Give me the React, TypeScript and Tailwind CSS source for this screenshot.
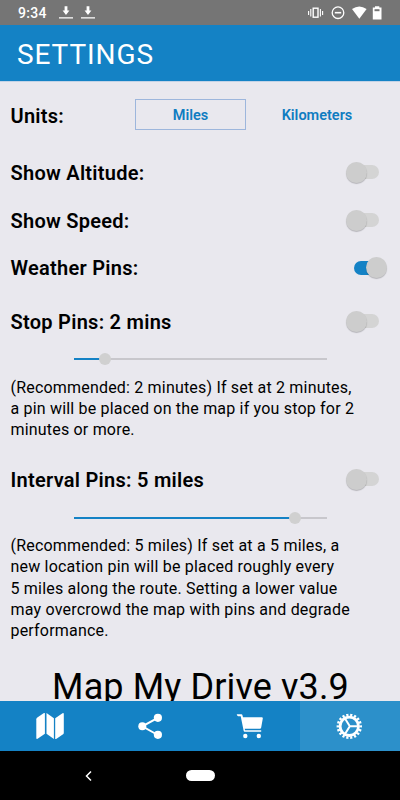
import { useState } from "react";

const DownloadIcon = () => (
  <svg width="14" height="13" viewBox="0 0 14 13" fill="white">
    <path d="M5.6 0.3h2.800v4.200h2L7 9 3.600 4.500h2zM0 11.200h14v1.200H0z" />
  </svg>
);

const MapIcon = () => (
  <svg width="28" height="28" viewBox="0 0 28 28" fill="currentColor">
    <path d="M8.900 1v20.800L1.600 26.800Q.3 27.300.3 26V7.300Q.3 6.300 1 5.800L7.500 1.300Q8.300.8 8.900 1z" />
    <path d="M10.500 1L17.900 6.200V27L10.500 21.800z" />
    <path d="M19.200 27V6.200L26.500 1.200Q27.800.7 27.800 2V20.700Q27.800 21.700 27.100 22.200L20.500 26.700Q19.800 27.200 19.200 27z" />
  </svg>
);

const ShareIcon = () => (
  <svg width="28" height="28" viewBox="0 0 28 28" fill="currentColor">
    <path
      d="M21.800 5.800L6.300 14.300L21.800 23"
      fill="none"
      stroke="currentColor"
      strokeWidth="2"
    />
    <circle cx="6.300" cy="14.300" r="4" />
    <circle cx="21.900" cy="5.800" r="4.100" />
    <circle cx="21.900" cy="22.800" r="4.100" />
  </svg>
);

const CartIcon = () => (
  <svg width="28" height="28" viewBox="0 0 28 28" fill="currentColor">
    <path d="M.7 2.300H5.500Q6.200 2.300 6.400 3L7 5.300H25.800Q27 5.300 26.800 6.500L25.200 15.500Q25 16.700 23.800 16.700H8.700L9 18.300H25.200V19.800H8.600Q7.900 19.800 7.700 19L4.700 4.300H2.200Q1.200 4.300.7 2.300z" />
    <circle cx="9.300" cy="24" r="2.200" />
    <circle cx="22.800" cy="24" r="2.200" />
  </svg>
);

const CogIcon = () => (
  <svg
    width="28"
    height="28"
    viewBox="0 0 28 28"
    fill="none"
    stroke="currentColor"
  >
    <circle cx="13.300" cy="14.300" r="9.200" strokeWidth="2.800" />
    <circle
      cx="13.300"
      cy="14.300"
      r="11.400"
      strokeWidth="2.600"
      pathLength="72"
      strokeDasharray="2.200 1.800"
      strokeDashoffset="1.100"
    />
    <path
      d="M22 14.300H14M9 6.500L13.800 14.300L9 22.100"
      strokeWidth="2"
    />
  </svg>
);

const StatusBar = () => (
  <div className="h-[25px] shrink-0 bg-[#757575] text-white flex items-center pl-[18px] pr-[17px]">
    <span className="text-sm font-medium leading-none tracking-[0.3px] w-[41px]">
      9:34
    </span>
    <div className="flex gap-2">
      <DownloadIcon />
      <DownloadIcon />
    </div>
    <svg
      className="ml-auto"
      width="76"
      height="16"
      viewBox="0 0 76 16"
      fill="none"
      stroke="white"
    >
      <rect x="6.200" y="3.200" width="4.800" height="9" strokeWidth="1.400" />
      <path d="M3.800 4v7.500M1.600 6v4M13.400 4v7.500M15.600 6v4" strokeWidth="1.100" />
      <circle cx="31" cy="7.700" r="5.800" strokeWidth="1.300" />
      <path d="M27.800 7.700h6.400" strokeWidth="1.600" />
      <path
        d="M45 4Q52.300-1.200 59.600 4L52.300 13.800z"
        fill="white"
        stroke="none"
      />
      <path
        d="M65.800 2.500h2.200V1.200h4.300v1.300h2.200v12H65.800z"
        fill="white"
        stroke="none"
      />
      <path d="M67.500 5.200h5" stroke="#757575" strokeWidth="2" />
    </svg>
  </div>
);

const Switch = ({
  label,
  checked,
  onChange,
}: {
  label: string;
  checked: boolean;
  onChange: () => void;
}) => (
  <button
    type="button"
    role="switch"
    aria-label={label}
    aria-checked={checked}
    className="relative w-[41px] h-[21px] flex items-center px-2"
    onClick={onChange}
  >
    <span
      className={`block w-full h-[14px] rounded-full ${
        checked ? "bg-[#1482c5]" : "bg-[#d4d4d4]"
      }`}
    />
    <span
      className={`absolute top-0 w-[21px] h-[21px] rounded-full bg-[#cdcdcd] shadow-[0_1px_1px_rgba(0,0,0,0.22)] ${
        checked ? "right-0" : "left-0"
      }`}
    />
  </button>
);

const SettingRow = ({
  label,
  text,
  className,
  initial = false,
}: {
  label: string;
  text: string;
  className: string;
  initial?: boolean;
}) => {
  const [on, setOn] = useState(initial);
  return (
    <div className={`flex items-center justify-between pr-[13px] ${className}`}>
      <span className="pt-px text-xl font-semibold tracking-[0.270px]">
        {text}
      </span>
      <Switch label={label} checked={on} onChange={() => setOn(!on)} />
    </div>
  );
};

const Slider = ({ percent }: { percent: number }) => (
  <div className="relative h-3 ml-[74px] w-[253px] flex items-center">
    <div className="w-full h-[2px] bg-[#c8c7cc]">
      <div className="h-full bg-[#1482c5]" style={{ width: `${percent}%` }} />
    </div>
    <div
      className="absolute top-0 w-3 h-3 -ml-1.5 rounded-full bg-[#d0d0d0]"
      style={{ left: `${percent}%` }}
    />
  </div>
);

const tabs = [
  { name: "Map", Icon: MapIcon },
  { name: "Share", Icon: ShareIcon },
  { name: "Store", Icon: CartIcon },
  { name: "Settings", Icon: CogIcon },
];

export default function App() {
  const [unit, setUnit] = useState("Miles");
  const [tab, setTab] = useState("Settings");

  return (
    <div className="w-[400px] h-[800px] flex flex-col overflow-hidden bg-[#e9e8ee] text-black font-[Roboto,sans-serif]">
      <StatusBar />
      <header className="h-14 shrink-0 bg-[#1482c5] flex items-center pl-[17px] pt-[3px]">
        <h1 className="text-[28px] leading-none text-white tracking-[0.9px]">
          SETTINGS
        </h1>
      </header>

      <main className="flex-1 min-h-0 overflow-hidden border-t border-[#c3d3e6]">
        <div className="pt-[17px] pl-[10.500px] flex items-center">
          <span className="w-[124.500px] pt-0.5 text-xl font-semibold tracking-[0.270px]">
            Units:
          </span>
          {["Miles", "Kilometers"].map((name) => (
            <button
              key={name}
              type="button"
              className={`h-[31px] mb-px pt-[3px] text-[14.500px] font-semibold text-[#0f7cc1] border ${
                unit === name ? "border-[#9db6dc]" : "border-transparent"
              } ${name === "Miles" ? "w-[111px]" : "w-[142px]"}`}
              onClick={() => setUnit(name)}
            >
              {name}
            </button>
          ))}
        </div>

        <div className="pl-[10.500px]">
          <SettingRow
            className="h-12 mt-[17px]"
            label="Altitude"
            text="Show Altitude:"
          />
          <SettingRow className="h-12" label="Speed" text="Show Speed:" />
          <SettingRow
            className="h-[47px]"
            label="Weather"
            text="Weather Pins:"
            initial
          />
          <SettingRow
            className="h-12 mt-[6px]"
            label="Stop"
            text="Stop Pins: 2 mins"
          />
        </div>
        <div className="mt-2">
          <Slider percent={12.4} />
        </div>
        <p className="mt-[11.500px] pl-[10.500px] text-base leading-[21.400px] tracking-[0.190px] whitespace-nowrap">
          (Recommended: 2 minutes) If set at 2 minutes,
          <br />a pin will be placed on the map if you stop for 2
          <br />
          minutes or more.
        </p>

        <div className="pl-[10.500px]">
          <SettingRow
            className="h-12 mt-[14.500px]"
            label="Interval"
            text="Interval Pins: 5 miles"
          />
        </div>
        <div className="mt-[9px]">
          <Slider percent={87.4} />
        </div>
        <p className="mt-[10.500px] pl-[10.500px] text-base leading-[21.400px] tracking-[0.200px] whitespace-nowrap">
          (Recommended: 5 miles) If set at a 5 miles, a
          <br />
          new location pin will be placed roughly every
          <br />5 miles along the route. Setting a lower value
          <br />
          may overcrowd the map with pins and degrade
          <br />
          performance.
        </p>

        <div className="mt-[24.500px] pl-px text-center text-[36px] leading-[42px] tracking-[0.120px] whitespace-nowrap">
          Map My Drive v3.9
        </div>
      </main>

      <nav className="h-[50px] shrink-0 grid grid-cols-4 bg-[#1482c5] text-white">
        {tabs.map(({ name, Icon }) => (
          <button
            key={name}
            type="button"
            aria-label={name}
            className={`flex items-center justify-center ${
              tab === name ? "bg-[#2c90ca]" : ""
            }`}
            onClick={() => setTab(name)}
          >
            <Icon />
          </button>
        ))}
      </nav>

      <div className="h-[49px] shrink-0 bg-black grid grid-cols-[177px_46px_177px] items-center">
        <svg
          className="justify-self-center"
          width="10"
          height="12"
          viewBox="0 0 10 12"
          fill="none"
          stroke="white"
          strokeWidth="1.5"
        >
          <path d="M7 1.500L2.500 6 7 10.500" />
        </svg>
        <div className="justify-self-center w-[29px] h-[11px] rounded-full bg-white" />
      </div>
    </div>
  );
}
